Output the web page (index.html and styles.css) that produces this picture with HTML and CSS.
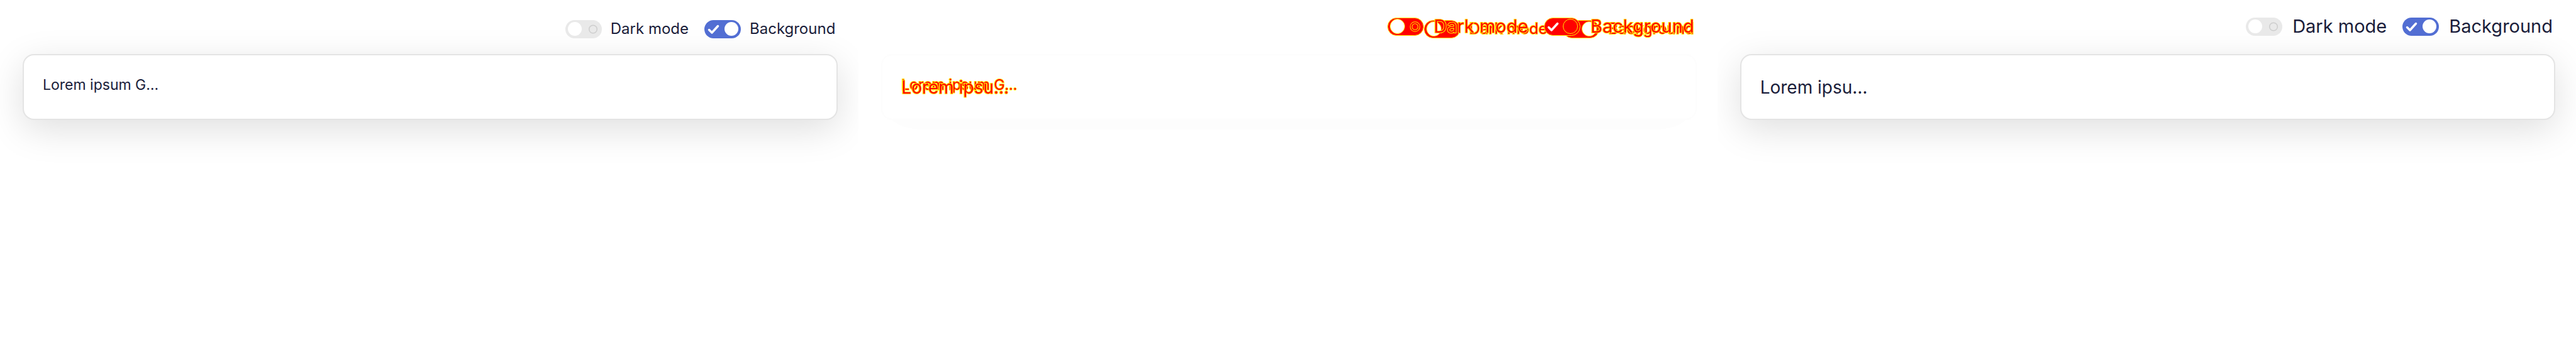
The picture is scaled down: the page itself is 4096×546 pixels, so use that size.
FILE: index.html
```html
<!DOCTYPE html>
<html lang="en">
<head>
<meta charset="utf-8">
<title>Preview comparison</title>
<link rel="stylesheet" href="styles.css">
</head>
<body>
<main class="compare">
  <section class="pane">
    <div class="view small">
      <div class="toolbar">
        <label class="option"><span class="switch"><input type="checkbox" role="switch"><svg class="mark" viewBox="0 0 58 29"><circle class="ring" cx="44" cy="14.5" r="6.3"/></svg></span>Dark mode</label>
        <label class="option"><span class="switch"><input type="checkbox" role="switch" checked><svg class="mark" viewBox="0 0 58 29"><path class="tick" d="M7.5 15.5l4.500 4.500 9.500-10.500"/></svg></span>Background</label>
      </div>
      <div class="card"><p class="text">Lorem ipsum G…</p></div>
    </div>
  </section>
  <section class="pane diff">
    <div class="view small">
      <div class="toolbar">
        <label class="option"><span class="switch"><input type="checkbox" role="switch"></span>Dark mode</label>
        <label class="option"><span class="switch"><input type="checkbox" role="switch" checked><svg class="mark" viewBox="0 0 58 29"><path class="tick" d="M7.5 15.5l4.500 4.500 9.500-10.500"/></svg></span>Background</label>
      </div>
      <div class="card"><p class="text">Lorem ipsum G…</p></div>
    </div>
    <div class="view large">
      <div class="toolbar">
        <label class="option"><span class="switch"><input type="checkbox" role="switch"><svg class="mark" viewBox="0 0 58 29"><circle class="halo" cx="44" cy="14.5" r="6.3"/><circle class="ring" cx="44" cy="14.5" r="6.3"/></svg></span>Dark mode</label>
        <label class="option"><span class="switch"><input type="checkbox" role="switch" checked><svg class="mark" viewBox="0 0 58 29"><path class="tick" d="M7.5 15.5l4.500 4.500 9.500-10.500"/></svg></span>Background</label>
      </div>
      <div class="card"><p class="text">Lorem ipsu…</p></div>
    </div>
  </section>
  <section class="pane">
    <div class="view large">
      <div class="toolbar">
        <label class="option"><span class="switch"><input type="checkbox" role="switch"><svg class="mark" viewBox="0 0 58 29"><circle class="ring" cx="44" cy="14.5" r="6.3"/></svg></span>Dark mode</label>
        <label class="option"><span class="switch"><input type="checkbox" role="switch" checked><svg class="mark" viewBox="0 0 58 29"><path class="tick" d="M7.5 15.5l4.500 4.500 9.500-10.500"/></svg></span>Background</label>
      </div>
      <div class="card"><p class="text">Lorem ipsu…</p></div>
    </div>
  </section>
</main>
</body>
</html>
```
FILE: styles.css
```css
* { box-sizing: border-box; }
body {
  margin: 0;
  background: #fff;
  color: #1a1d3a;
  font-family: Inter, "Liberation Sans", sans-serif;
}
.compare {
  display: grid;
  grid-template-columns: repeat(3, minmax(0, 1fr));
  min-height: 100vh;
}
.pane { display: grid; overflow: hidden; }
.view {
  grid-area: 1 / 1;
  padding: 0 33px 0 36px;
}
.small { font-size: 24px; line-height: 40px; }
.large { font-size: 29px; line-height: 48px; }
.toolbar {
  display: flex;
  justify-content: flex-end;
  gap: 25px;
  height: 86px;
  padding: 26px 4px 0 0;
}
.large .toolbar { padding-top: 18px; }
.option {
  position: relative;
  z-index: 1;
  display: flex;
  align-items: center;
  align-self: flex-start;
  gap: 14px;
  white-space: nowrap;
}
.large .option { gap: 16px; }
.switch { position: relative; display: block; width: 58px; height: 29px; }
.switch input {
  appearance: none;
  display: flex;
  align-items: center;
  width: 58px;
  height: 29px;
  margin: 0;
  padding: 0 4px;
  border-radius: 15px;
  background: #e9e9e9;
}
.switch input::before {
  content: "";
  width: 22px;
  height: 22px;
  border-radius: 50%;
  background: #fff;
}
.switch input:checked { justify-content: flex-end; background: #526ed3; }
.mark {
  position: absolute;
  inset: 0;
  width: 58px;
  height: 29px;
  fill: none;
  pointer-events: none;
}
.ring { stroke: #cdcdcd; stroke-width: 1.5; }
.tick { stroke: #fff; stroke-width: 3.5; stroke-linecap: round; stroke-linejoin: round; }
.card {
  min-height: 105px;
  padding: 27px 30px 26px;
  border: 2px solid #e4e4e4;
  border-radius: 18px;
  background: #fff;
  box-shadow: 0 15px 58px rgba(0, 0, 0, .13);
}
.text { margin: 0; }
.small .text { font-size: 23px; }
.large .text { font-size: 28px; }
.diff { color: #f00; }
.diff .card { border-color: #fdfdfd; background: transparent; box-shadow: 0 15px 58px rgba(0, 0, 0, .008); }
.diff .text, .diff .option { -webkit-text-stroke: 2px #fe0; paint-order: stroke fill; }
.diff .option { position: static; }
.diff .small .mark { z-index: 2; }
.diff .switch input, .diff .switch input:checked { background: #f00; border: 1px solid #fe0; padding: 0 3px; }
.diff .switch input::before { border: 1px solid #fe0; }
.diff .large .switch input:checked::before { background: #f00; }
.diff .halo { stroke: #fe0; stroke-width: 4; }
.diff .ring { stroke: #f00; stroke-width: 2; }
```
